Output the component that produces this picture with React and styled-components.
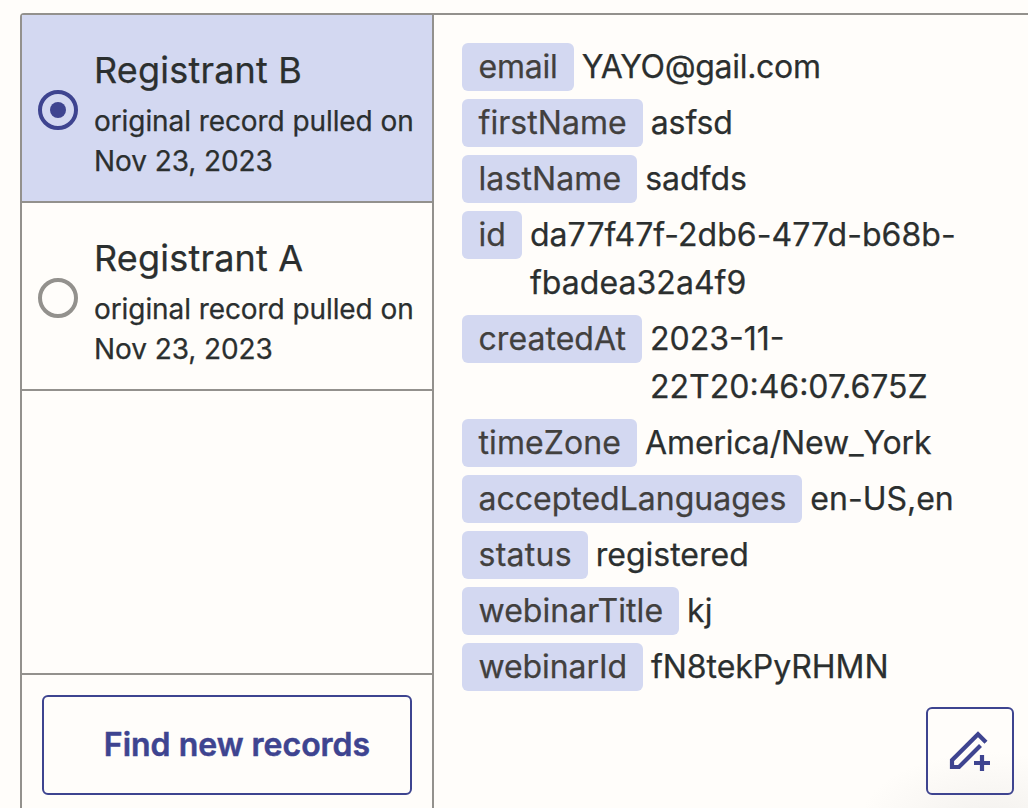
import React,{useState} from "react";
import styled,{createGlobalStyle} from "styled-components";
const colors = {
    BACKGROUND:"#fffdfa",
    BORDER:"#93918d",
    PRIMARY:"#3e4490",
    HIGHLIGHT:"#d3d8f1",
    TEXT:"#2b2f2f",
    LABEL:"#42403e"
};
const GlobalStyle = createGlobalStyle`
    *{box-sizing:border-box;}
    body{margin:0;background:${colors.BACKGROUND};color:${colors.TEXT};font-family:Inter,sans-serif;-webkit-text-stroke:0.25px currentColor;overflow:hidden;}
`;
const Wrapper = styled.div`
    width:1028px;height:808px;padding:13px 0 0 20px;overflow:hidden;background:radial-gradient(ellipse 130px 70px at 990px 822px,#f3f1ee,${colors.BACKGROUND});
`;
const Panel = styled.div`
    display:flex;width:1040px;height:820px;border:2px solid ${colors.BORDER};border-radius:4px 0 0 0;
`;
const Sidebar = styled.div`
    display:flex;flex-direction:column;flex:none;width:412px;height:793px;border-right:2px solid ${colors.BORDER};
`;
const Record = styled.div`
    display:flex;align-items:center;column-gap:16px;height:188px;padding:4px 0 0 16px;border-bottom:2px solid ${colors.BORDER};cursor:pointer;
    background:${({$active}) => $active ? colors.HIGHLIGHT : "transparent"};
`;
const Radio = styled.span`
    display:flex;align-items:center;justify-content:center;flex:none;width:40px;height:40px;border-radius:50%;
    border:4px solid ${({$active}) => $active ? colors.PRIMARY : colors.BORDER};
    &::after{
        content:"";width:16px;height:16px;border-radius:50%;background:${({$active}) => $active ? colors.PRIMARY : "transparent"};
    }
`;
const RecordText = styled.div`
    width:330px;padding-top:4px;
`;
const Title = styled.div`
    font-size:36px;line-height:54px;letter-spacing:0.2px;
`;
const Subtitle = styled.div`
    margin-top:4px;font-size:28px;line-height:40px;letter-spacing:-0.08px;
`;
const SidebarFooter = styled.div`
    margin-top:auto;height:135px;padding:20px;border-top:2px solid ${colors.BORDER};
`;
const FindButton = styled.button`
    display:block;width:370px;height:100px;padding:0 0 2px 20px;border:2px solid ${colors.PRIMARY};border-radius:6px;background:transparent;color:${colors.PRIMARY};font-family:inherit;font-size:32px;font-weight:600;-webkit-text-stroke:0.5px currentColor;cursor:pointer;
`;
const Details = styled.div`
    display:flex;flex-direction:column;row-gap:8px;width:594px;padding:28px 36px 0 28px;position:relative;
`;
const Field = styled.div`
    display:flex;align-items:flex-start;column-gap:8px;font-size:32px;line-height:48px;
`;
const Label = styled.span`
    flex:none;padding:0 16px 0 16.5px;border-radius:6px;background:${colors.HIGHLIGHT};color:${colors.LABEL};letter-spacing:${({$tracking}) => $tracking ?? 0.05}px;
`;
const Value = styled.span`
    letter-spacing:${({$tracking}) => $tracking ?? 0}px;
`;
const EditButton = styled.button`
    display:flex;align-items:center;justify-content:center;width:88px;height:88px;padding:0;border:2px solid ${colors.PRIMARY};border-radius:6px;background:transparent;color:${colors.PRIMARY};cursor:pointer;
    position:absolute;right:14px;top:692px;
`;
const records = [
    {id:"b",title:"Registrant B"},
    {id:"a",title:"Registrant A"}
];
const fields = [
    {name:"email",value:"YAYO@gail.com",labelTracking:-0.2,valueTracking:-0.3},
    {name:"firstName",value:"asfsd",valueTracking:-0.1},
    {name:"lastName",value:"sadfds",labelTracking:0.1},
    {name:"id",value:"da77f47f-2db6-477d-b68b-fbadea32a4f9",valueTracking:0.05},
    {name:"createdAt",value:"2023-11-22T20:46:07.675Z"},
    {name:"timeZone",value:"America/New_York",labelTracking:0.1,valueTracking:-0.15},
    {name:"acceptedLanguages",value:"en-US,en",labelTracking:0},
    {name:"status",value:"registered",labelTracking:0.25},
    {name:"webinarTitle",value:"kj"},
    {name:"webinarId",value:"fN8tekPyRHMN",labelTracking:-0.08,valueTracking:-0.05}
];
const PencilPlusIcon = () => (
    <svg width="48" height="48" viewBox="0 0 48 48" fill="none" stroke="currentColor" strokeWidth="4.2">
        <path d="M40 15.2L32 7.2L6 33.2V40H13L34.5 18.5"/>
        <path d="M36 28V44M28 36H44"/>
    </svg>
);
const App = () => {
    const [selected,setSelected] = useState("b");
    return (
        <React.Fragment>
            <GlobalStyle/>
            <Wrapper>
                <Panel>
                    <Sidebar>
                        {records.map(({id,title}) => (
                            <Record key={id} $active={selected === id} onClick={() => setSelected(id)}>
                                <Radio $active={selected === id}/>
                                <RecordText>
                                    <Title>{title}</Title>
                                    <Subtitle>original record pulled on Nov 23, 2023</Subtitle>
                                </RecordText>
                            </Record>
                        ))}
                        <SidebarFooter>
                            <FindButton type="button">Find new records</FindButton>
                        </SidebarFooter>
                    </Sidebar>
                    <Details>
                        {fields.map(({name,value,labelTracking,valueTracking}) => (
                            <Field key={name}>
                                <Label $tracking={labelTracking}>{name}</Label>
                                <Value $tracking={valueTracking}>{value}</Value>
                            </Field>
                        ))}
                        <EditButton type="button" aria-label="Edit record"><PencilPlusIcon/></EditButton>
                    </Details>
                </Panel>
            </Wrapper>
        </React.Fragment>
    );
}
export default App;
